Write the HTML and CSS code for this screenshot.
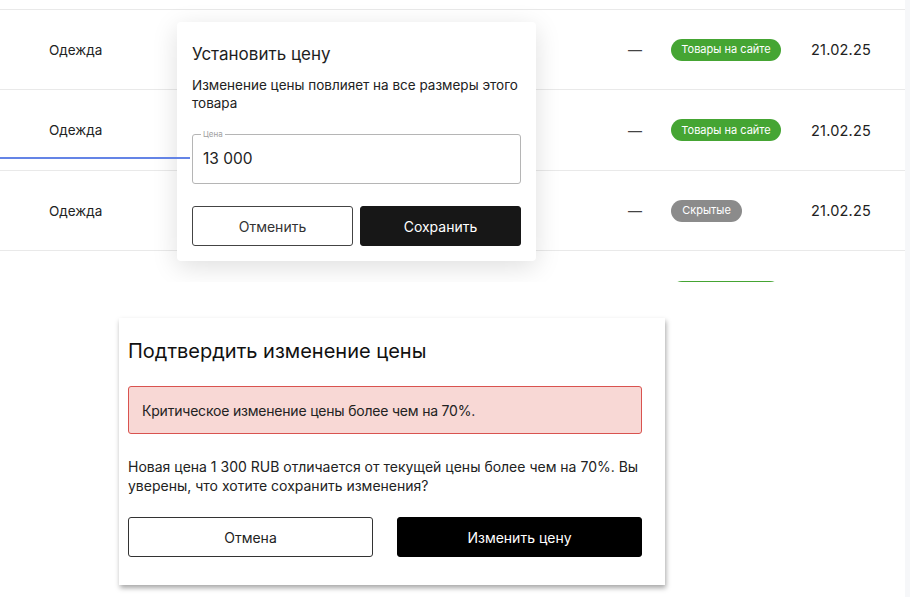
FILE: index.html
```html
<!DOCTYPE html>
<html lang="ru">
<head>
<meta charset="utf-8">
<link rel="stylesheet" href="styles.css">
</head>
<body>
<div class="page">
  <main class="main">
    <section class="table-area">
      <div class="table">
        <div class="row row-top"></div>
        <div class="row row-a">
          <div class="cell cat">Одежда</div>
          <div class="cell dash">—</div>
          <div class="cell status"><span class="badge green">Товары на сайте</span></div>
          <div class="cell date">21.02.25</div>
        </div>
        <div class="row row-b">
          <div class="cell cat">Одежда</div>
          <div class="cell dash">—</div>
          <div class="cell status"><span class="badge green">Товары на сайте</span></div>
          <div class="cell date">21.02.25</div>
        </div>
        <div class="row row-a">
          <div class="cell cat">Одежда</div>
          <div class="cell dash">—</div>
          <div class="cell status"><span class="badge gray">Скрытые</span></div>
          <div class="cell date">21.02.25</div>
        </div>
        <div class="row row-last">
          <div class="cell cat"></div>
          <div class="cell dash"></div>
          <div class="cell status"><span class="badge green"></span></div>
          <div class="cell date"></div>
        </div>
      </div>
      <div class="connector"></div>
      <div class="popup">
        <h2 class="popup-title">Установить цену</h2>
        <p class="popup-text">Изменение цены повлияет на все размеры этого товара</p>
        <fieldset class="field">
          <legend class="field-label">Цена</legend>
          <div class="field-value">13 000</div>
        </fieldset>
        <div class="actions actions-sm">
          <button class="btn btn-outline">Отменить</button>
          <button class="btn btn-dark">Сохранить</button>
        </div>
      </div>
    </section>
    <section class="confirm">
      <h2 class="confirm-title">Подтвердить изменение цены</h2>
      <div class="alert">Критическое изменение цены более чем на 70%.</div>
      <p class="confirm-text">Новая цена 1 300 RUB отличается от текущей цены более чем на 70%. Вы уверены, что хотите сохранить изменения?</p>
      <div class="actions actions-lg">
        <button class="btn btn-outline2">Отмена</button>
        <button class="btn btn-black">Изменить цену</button>
      </div>
    </section>
  </main>
  <aside class="strip"></aside>
</div>
</body>
</html>
```
FILE: styles.css
```css
* { box-sizing: border-box; }
html, body { margin: 0; padding: 0; }
body {
  font-family: Inter, "Noto Sans", sans-serif;
  color: #222;
  background: #fff;
}
.page {
  display: flex;
  width: 910px;
  height: 597px;
  overflow: hidden;
}
.main {
  width: 905px;
  flex: none;
}
.strip {
  flex: 1;
  background: #f6f7f9;
}
.table-area {
  position: relative;
  height: 282px;
  overflow: hidden;
}
.table { width: 905px; }
.row {
  display: flex;
  align-items: center;
  border-bottom: 1px solid #e9e9e9;
}
.row-top { height: 10px; }
.row-a { height: 80px; }
.row-b { height: 81px; }
.row-last {
  height: 60px;
  border-bottom: none;
  align-items: flex-start;
  padding-top: 30px;
}
.cell { font-size: 13.5px; }
.cat { width: 628px; padding-left: 49px; color: #222; }
.dash { width: 43px; color: #444; font-size: 14px; }
.status { width: 140px; }
.date { font-size: 14.5px; color: #222; letter-spacing: 0.2px; }
.badge {
  display: inline-flex;
  align-items: center;
  justify-content: center;
  height: 22px;
  border-radius: 11px;
  color: #fff;
  font-size: 11px;
  white-space: nowrap;
  padding-bottom: 1px;
}
.badge.green { background: #45a533; width: 110px; }
.badge.gray { background: #8b8b8b; width: 71px; }
.connector {
  position: absolute;
  left: 0;
  top: 157px;
  width: 190px;
  height: 2px;
  background: #6484e6;
  z-index: 2;
}
.popup {
  position: absolute;
  left: 177px;
  top: 22px;
  width: 359px;
  height: 239px;
  background: #fff;
  border-radius: 4px;
  box-shadow: 0 6px 26px rgba(0,0,0,0.13);
  padding: 19px 15px 15px;
  display: flex;
  flex-direction: column;
}
.popup-title {
  margin: 0;
  font-size: 17px;
  font-weight: 400;
  line-height: 26px;
  color: #1e1e1e;
}
.popup-text {
  margin: 9px 0 0;
  font-size: 13.5px;
  line-height: 18px;
  color: #222;
}
.field {
  margin: 18px 0 0;
  padding: 0 10px;
  height: 54px;
  flex: none;
  border: 1px solid #b5b5b5;
  border-radius: 3px;
  min-width: 0;
}
.field-label {
  padding: 0 2px;
  margin-left: -2px;
  font-size: 8px;
  line-height: 8px;
  color: #a0a0a0;
}
.field-value {
  font-size: 15.5px;
  line-height: 20px;
  margin-top: 11px;
  color: #222;
}
.actions { display: flex; }
.actions-sm { gap: 7px; margin-top: 22px; }
.btn {
  flex: 1;
  height: 40px;
  font-family: inherit;
  font-size: 14px;
  border-radius: 3px;
  cursor: pointer;
}
.btn-outline { background: #fff; border: 1px solid #444; color: #333; }
.btn-dark { background: #171717; border: 1px solid #171717; color: #fff; }
.confirm {
  margin: 36px 0 0 119px;
  width: 546px;
  height: 267px;
  background: #fff;
  box-shadow: 1px 3px 5px rgba(0,0,0,0.35);
  padding: 21px 23px 0 9px;
}
.confirm-title {
  margin: 0;
  font-size: 20px;
  font-weight: 400;
  line-height: 24px;
  color: #111;
}
.alert {
  margin-top: 23px;
  height: 48px;
  display: flex;
  align-items: center;
  padding-left: 13px;
  background: #f8d8d5;
  border: 1px solid #d9534f;
  border-radius: 3px;
  font-size: 14px;
  letter-spacing: -0.2px;
  color: #222;
}
.confirm-text {
  margin: 23px 0 0;
  font-size: 14px;
  line-height: 19px;
  color: #222;
}
.actions-lg { gap: 24px; margin-top: 22px; }
.btn-outline2 { background: #fff; border: 1px solid #333; color: #222; }
.btn-black { background: #000; border: 1px solid #000; color: #fff; }
```
